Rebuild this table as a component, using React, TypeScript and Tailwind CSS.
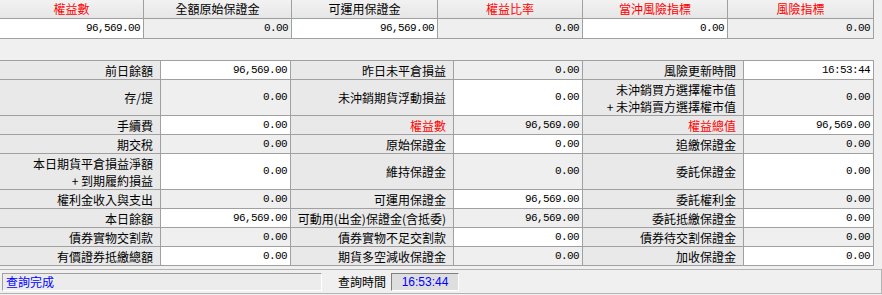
const cjk = "font-['Noto_Sans_CJK_TC','Noto_Sans',sans-serif]";
const mono = "font-['Liberation_Mono',monospace] text-[11px] tracking-[-0.6px]";

type Head = { label: string; value: string; red?: boolean; white: boolean };

const summary: Head[] = [
  { label: "權益數", value: "96,569.00", red: true, white: true },
  { label: "全額原始保證金", value: "0.00", white: false },
  { label: "可運用保證金", value: "96,569.00", white: true },
  { label: "權益比率", value: "0.00", red: true, white: false },
  { label: "當沖風險指標", value: "0.00", red: true, white: true },
  { label: "風險指標", value: "0.00", red: true, white: false },
];

type Cell = { label: string[]; value: string; red?: boolean };
type Row = { tall?: boolean; cells: Cell[] };

const rows: Row[] = [
  {
    cells: [
      { label: ["前日餘額"], value: "96,569.00" },
      { label: ["昨日未平倉損益"], value: "0.00" },
      { label: ["風險更新時間"], value: "16:53:44" },
    ],
  },
  {
    tall: true,
    cells: [
      { label: ["存/提"], value: "0.00" },
      { label: ["未沖銷期貨浮動損益"], value: "0.00" },
      { label: ["未沖銷買方選擇權市值", "+ 未沖銷賣方選擇權市值"], value: "0.00" },
    ],
  },
  {
    cells: [
      { label: ["手續費"], value: "0.00" },
      { label: ["權益數"], value: "96,569.00", red: true },
      { label: ["權益總值"], value: "96,569.00", red: true },
    ],
  },
  {
    cells: [
      { label: ["期交稅"], value: "0.00" },
      { label: ["原始保證金"], value: "0.00" },
      { label: ["追繳保證金"], value: "0.00" },
    ],
  },
  {
    tall: true,
    cells: [
      { label: ["本日期貨平倉損益淨額", "+ 到期履約損益"], value: "0.00" },
      { label: ["維持保證金"], value: "0.00" },
      { label: ["委託保證金"], value: "0.00" },
    ],
  },
  {
    cells: [
      { label: ["權利金收入與支出"], value: "0.00" },
      { label: ["可運用保證金"], value: "96,569.00" },
      { label: ["委託權利金"], value: "0.00" },
    ],
  },
  {
    cells: [
      { label: ["本日餘額"], value: "96,569.00" },
      { label: ["可動用(出金)保證金(含抵委)"], value: "96,569.00" },
      { label: ["委託抵繳保證金"], value: "0.00" },
    ],
  },
  {
    cells: [
      { label: ["債券實物交割款"], value: "0.00" },
      { label: ["債券實物不足交割款"], value: "0.00" },
      { label: ["債券待交割保證金"], value: "0.00" },
    ],
  },
  {
    cells: [
      { label: ["有價證券抵繳總額"], value: "0.00" },
      { label: ["期貨多空減收保證金"], value: "0.00" },
      { label: ["加收保證金"], value: "0.00" },
    ],
  },
];

export default function App() {
  return (
    <div className={`w-[882px] h-[295px] overflow-hidden bg-[#f0f0f0] text-black ${cjk}`}>
      {/* summary strip */}
      <div className="w-[874px] grid grid-cols-[143px_147px_145px_144px_144px_145px] grid-rows-[18px_19px] gap-px bg-[#a0a0a0] border-r border-b border-[#a0a0a0]">
        {summary.map((h) => (
          <div
            key={h.label}
            className={`flex items-center justify-center text-[12px] leading-none bg-gradient-to-b from-[#f2f2f2] to-[#e6e6e6] ${h.red ? "text-[#ff0000]" : ""}`}
          >
            {h.label}
          </div>
        ))}
        {summary.map((h) => (
          <div
            key={h.label + "v"}
            className={`flex items-center justify-end pr-[3px] ${mono} ${h.white ? "bg-white" : "bg-[#efefef]"}`}
          >
            {h.value}
          </div>
        ))}
      </div>

      {/* detail table */}
      <div className="mt-[21px] w-[874px] grid grid-cols-[160px_129px_162px_128px_160px_129px] gap-px bg-[#a0a0a0] border-t border-r border-b border-[#a0a0a0]">
        {rows.map((r, ri) =>
          r.cells.map((c, ci) => {
            const white = (ri + ci) % 2 === 0;
            return [
              <div
                key={`${ri}-${ci}-l`}
                className={`flex flex-col items-end justify-center pr-[7px] text-[12px] leading-[17px] bg-[#e9e9e9] ${r.tall ? "h-[35px]" : "h-[18px]"} ${c.red ? "text-[#ff0000]" : ""}`}
              >
                {c.label.map((t) => (
                  <span key={t} className="whitespace-pre">{t}</span>
                ))}
              </div>,
              <div
                key={`${ri}-${ci}-v`}
                className={`flex items-center justify-end pr-[3px] ${mono} ${white ? "bg-white" : "bg-[#efefef]"}`}
              >
                {c.value}
              </div>,
            ];
          })
        )}
      </div>

      {/* status bar */}
      <div className="mt-[3px] h-[25px] border-t border-b border-r border-[#b4b4b4] flex items-center gap-[16px] pl-[2px] text-[12px]">
        <div className="w-[320px] h-[18px] flex items-center pl-[3px] border border-t-[#a0a0a0] border-l-[#a0a0a0] border-b-white border-r-white bg-[#ececec] text-[#0000ff]">
          查詢完成
        </div>
        <div className="flex items-center gap-[5px]">
          <span>查詢時間</span>
          <div className="w-[68px] h-[18px] flex items-center justify-center border border-t-[#808080] border-l-[#808080] border-b-white border-r-white bg-[#dedede] text-[#0000ff] font-['Liberation_Sans',sans-serif]">
            16:53:44
          </div>
        </div>
      </div>
    </div>
  );
}
